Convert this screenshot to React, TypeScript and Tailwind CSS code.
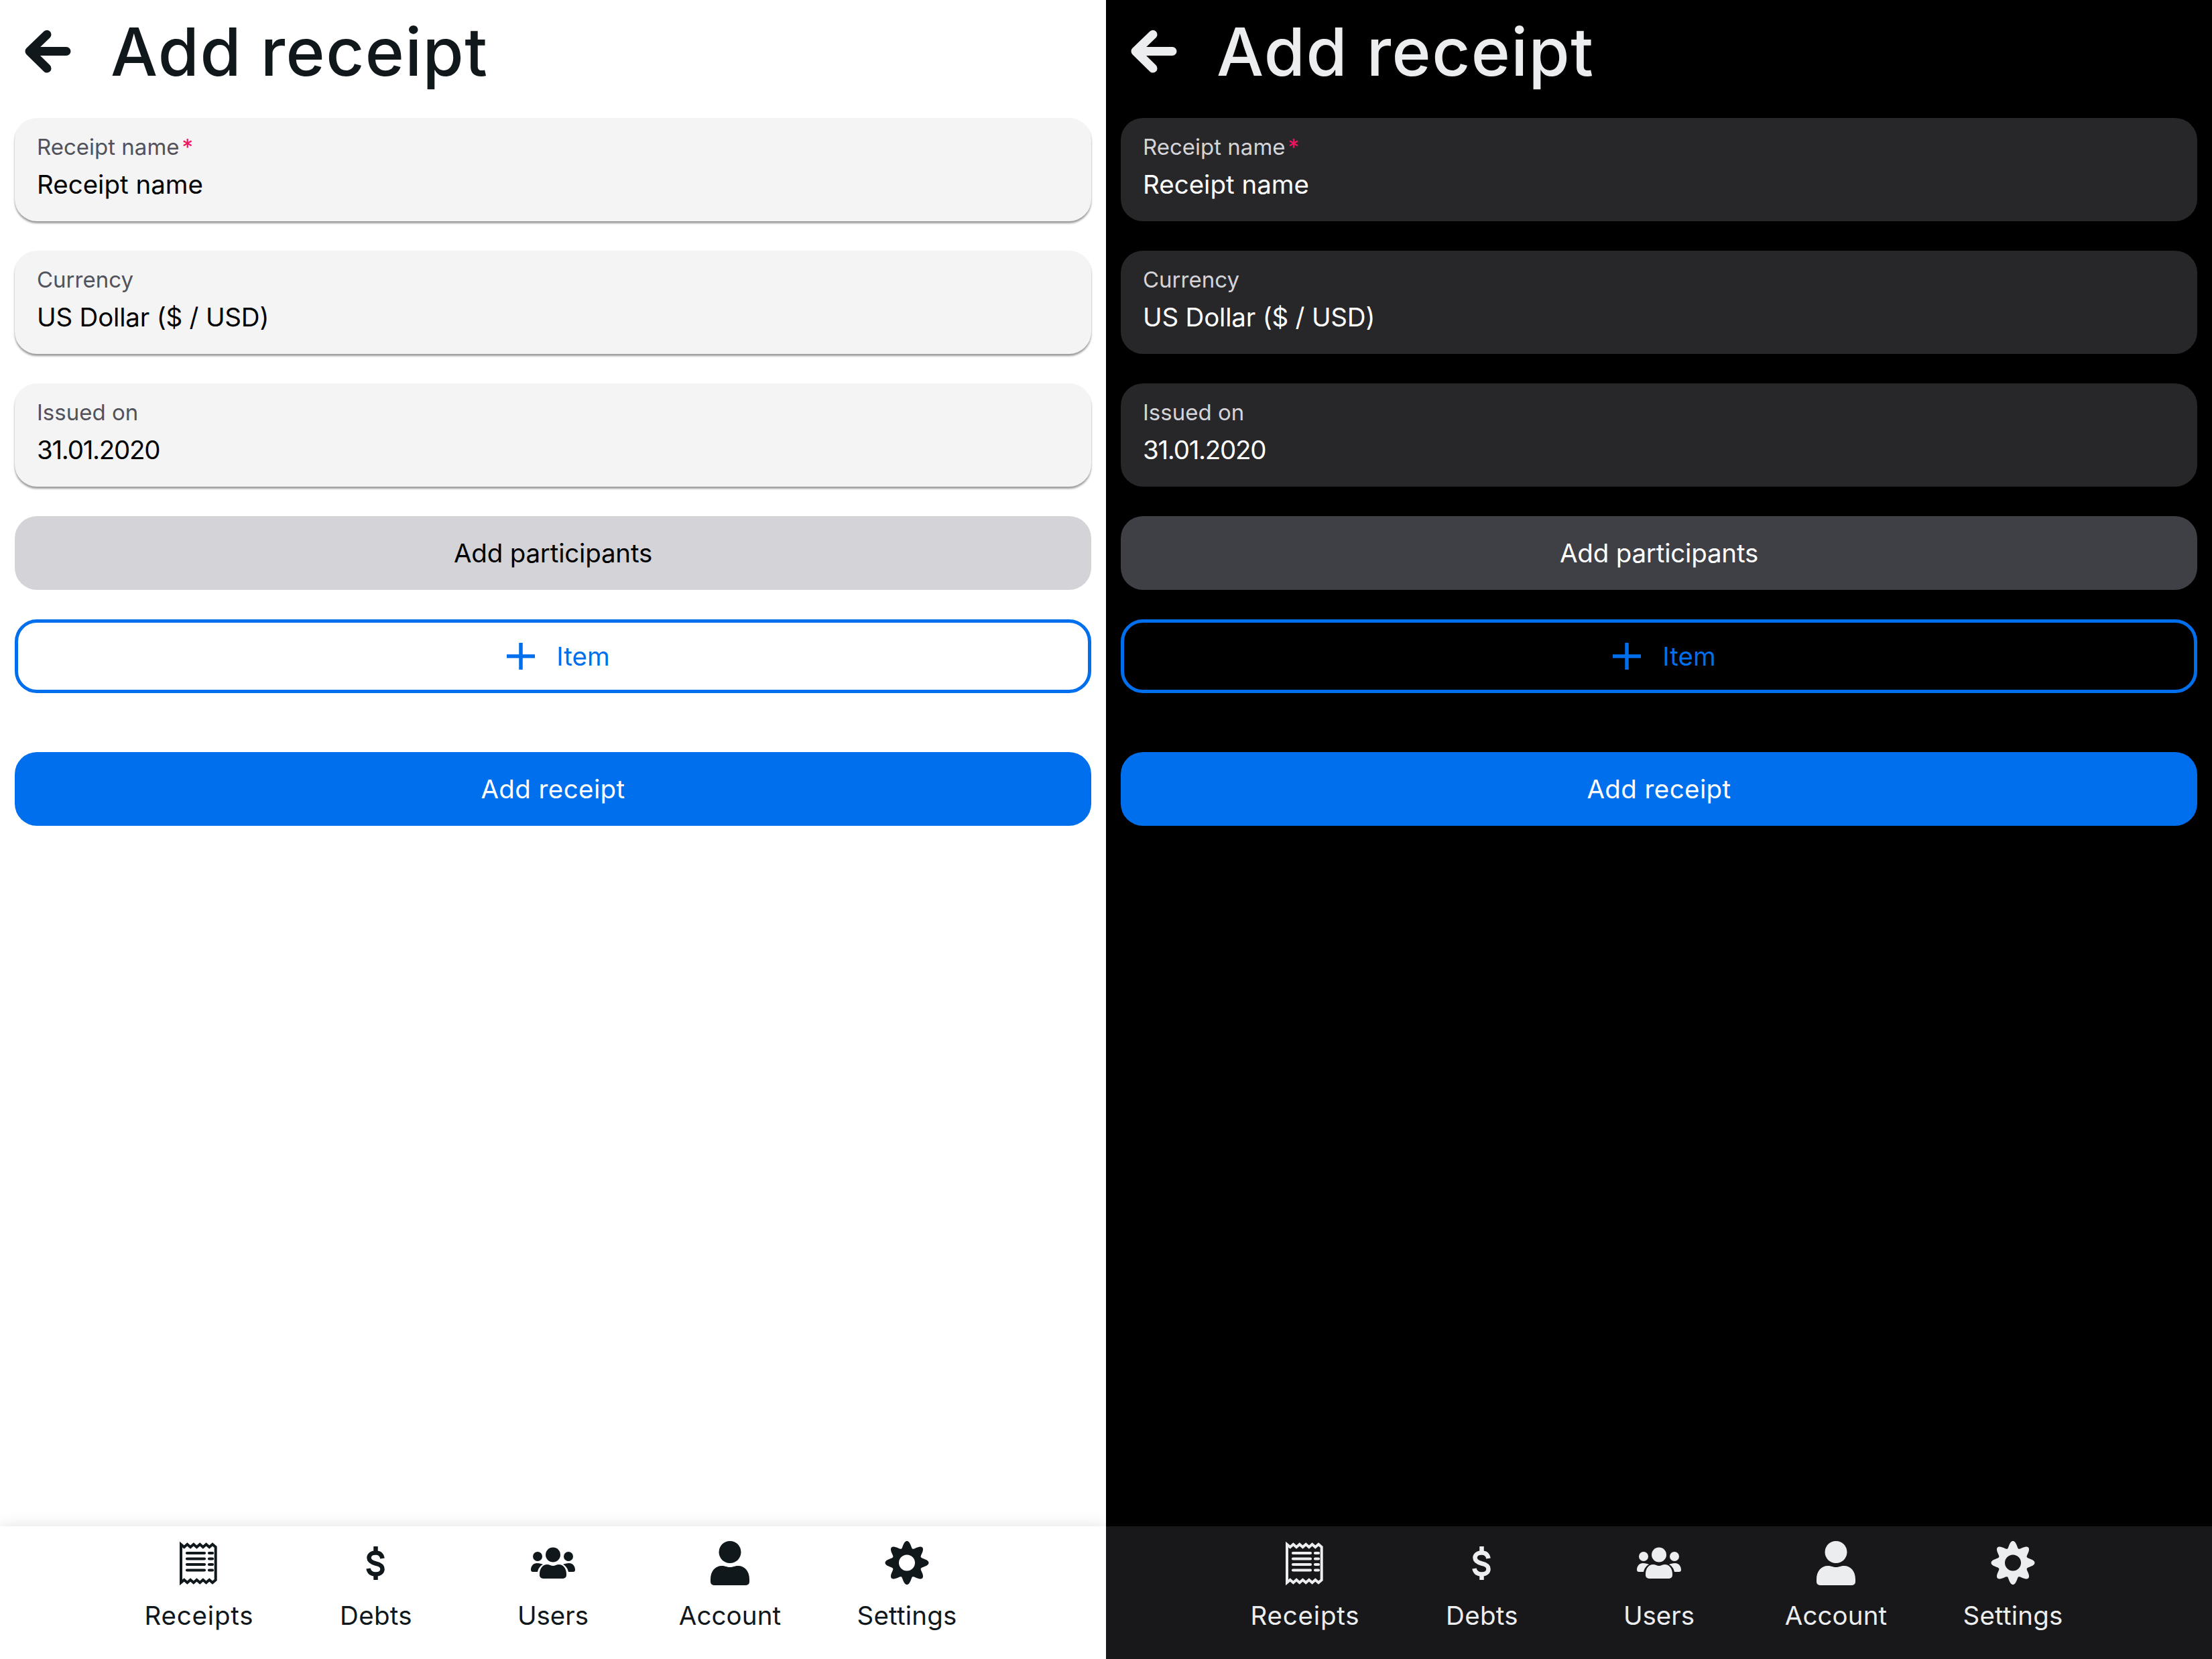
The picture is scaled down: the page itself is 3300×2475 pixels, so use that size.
import React from 'react';

const gearPath = () => {
  const pts: string[] = [];
  for (let i = 0; i < 240; i++) {
    const t = (i / 240) * Math.PI * 2;
    const r = 27.5 + 5 * Math.cos(8 * t);
    pts.push(`${(45 + r * Math.cos(t)).toFixed(2)} ${(41.5 + r * Math.sin(t)).toFixed(2)}`);
  }
  return `M${pts.join('L')}Z M45 29.5a12 12 0 1 0 0 24a12 12 0 1 0 0-24Z`;
};

const ReceiptIcon = () => (
  <svg viewBox="0 0 90 90" className="w-[90px] h-[90px]" fill="none" stroke="currentColor">
    <path
      strokeWidth="4"
      d="M18 14l4.7 4 4.7-4 4.7 4 4.7-4 4.7 4 4.7-4 4.7 4 4.7-4 4.7 4 4.7-4 4.7 4 0 0V67l-4.7 4-4.7-4-4.7 4-4.7-4-4.7 4-4.7-4-4.7 4-4.7-4-4.7 4-4.7-4-4.7 4Z"
    />
    <path strokeWidth="4.2" strokeLinecap="round" d="M27 27H53M27 35.5H53M27 44H53M27 52.5H53M60 27H65M60 35.5H65M60 44H65M60 52.5H65" />
  </svg>
);

const DollarIcon = () => (
  <svg viewBox="0 0 90 90" className="w-[90px] h-[90px]" fill="none" stroke="currentColor">
    <path strokeWidth="6.5" d="M54.5 35C53.5 29 50 26.5 44.5 26.5C38 26.5 34.5 30 34.5 34C34.5 39 39 41 44.5 42.5C51 44 54.5 46 54.5 51C54.5 55 51 58.5 44.5 58.5C38.5 58.5 34.5 55.5 33.5 50" />
    <path strokeWidth="6.5" d="M44.5 17V25M44.5 59V67" />
  </svg>
);

const UsersIcon = () => (
  <svg viewBox="0 0 90 90" className="w-[90px] h-[90px]" fill="currentColor">
    <circle cx="45" cy="29.5" r="11" />
    <circle cx="22" cy="32" r="7" />
    <circle cx="68" cy="32" r="7" />
    <path d="M25 58C25 50 30 44 36 44C40 44 42 46 45 46C48 46 50 44 54 44C60 44 65 50 65 58V60a5 5 0 0 1-5 5H30a5 5 0 0 1-5-5Z" />
    <path d="M12 52C12 46 16 42 21 42C25 42 28 43 30 44C26 46 23 50 22 55H15a3 3 0 0 1-3-3Z" />
    <path d="M78 52C78 46 74 42 69 42C65 42 62 43 60 44C64 46 67 50 68 55H75a3 3 0 0 0 3-3Z" />
  </svg>
);

const AccountIcon = () => (
  <svg viewBox="0 0 90 90" className="w-[90px] h-[90px]" fill="currentColor">
    <circle cx="45" cy="25.5" r="16.5" />
    <path d="M16 66C16 54 23 46 33 46C38 46 40 48 45 48C50 48 52 46 57 46C67 46 74 54 74 66V70a5 5 0 0 1-5 5H21a5 5 0 0 1-5-5Z" />
  </svg>
);

const GearIcon = () => (
  <svg viewBox="0 0 90 90" className="w-[90px] h-[90px]" fill="currentColor">
    <path fillRule="evenodd" d={gearPath()} />
  </svg>
);

const tabs = [
  { label: 'Receipts', icon: <ReceiptIcon />, tracking: 'tracking-[0.8px]' },
  { label: 'Debts', icon: <DollarIcon />, tracking: 'tracking-[0.3px]' },
  { label: 'Users', icon: <UsersIcon />, tracking: 'tracking-[0px]' },
  { label: 'Account', icon: <AccountIcon />, tracking: 'tracking-[0.1px]' },
  { label: 'Settings', icon: <GearIcon />, tracking: 'tracking-[0.2px]' },
];

const Field = ({ label, value, required, dark, valueTracking }: { label: string; value: string; required?: boolean; dark: boolean; valueTracking?: string }) => (
  <div
    className={`h-[154px] rounded-[33px] px-[33px] pt-[21px] ${
      dark ? 'bg-[#27272a]' : 'bg-[#f4f4f5] shadow-[0_3px_3px_rgba(0,0,0,0.4)]'
    }`}
  >
    <div className={`text-[33px] leading-[44px] ${dark ? 'text-[#d4d4d8]' : 'text-[#52525b]'}`}>
      {label}
      {required && <span className="text-[#f31260] ml-[4px]">*</span>}
    </div>
    <div className={`mt-[7px] text-[38.5px] leading-[55px] ${valueTracking ?? ''} ${dark ? 'text-white' : 'text-black'}`}>{value}</div>
  </div>
);

const Pane = ({ dark }: { dark: boolean }) => (
  <div className={`flex flex-col h-[2475px] ${dark ? 'bg-black' : 'bg-white'}`}>
    <header className={`flex items-start h-[176px] shrink-0 pl-[20px] pt-[30px] ${dark ? 'text-[#ecedee]' : 'text-[#11181c]'}`}>
      <svg viewBox="0 0 100 100" className="w-[100px] h-[100px]" fill="none" stroke="currentColor">
        <path strokeWidth="13" strokeLinecap="round" strokeLinejoin="round" d="M50 21.5L24 46.5L50 72M24 46.5H79" />
      </svg>
      <h1 className="ml-[45px] -mt-[8px] text-[99px] leading-[110px] font-medium tracking-[1.4px]">Add receipt</h1>
    </header>
    <main className="flex flex-col gap-[44px] px-[22px]">
      <Field dark={dark} label="Receipt name" value="Receipt name" required />
      <Field dark={dark} label="Currency" value="US Dollar ($ / USD)" valueTracking="tracking-[-0.2px]" />
      <Field dark={dark} label="Issued on" value="31.01.2020" valueTracking="tracking-[-1.3px]" />
      <button className={`h-[110px] rounded-[33px] pt-[2px] text-[38.5px] tracking-[-0.2px] ${dark ? 'bg-[#3f3f46] text-white' : 'bg-[#d4d4d8] text-black'}`}>
        Add participants
      </button>
      <button className="h-[110px] rounded-[33px] border-[5.5px] border-[#006fee] pl-[16px] pt-[2px] text-[38.5px] text-[#006fee] flex items-center justify-center gap-[32px]">
        <svg viewBox="0 0 42 40" className="w-[42px] h-[40px] -mt-[2px]" fill="none" stroke="currentColor">
          <path strokeWidth="5.5" d="M21 0V40M0 20H42" />
        </svg>
        Item
      </button>
      <button className="mt-[44px] h-[110px] rounded-[33px] bg-[#006fee] pt-[2px] text-white text-[38.5px] tracking-[0.4px]">Add receipt</button>
    </main>
    <footer
      className={`mt-auto h-[198px] shrink-0 flex justify-center pt-[13px] ${
        dark ? 'bg-[#18181b] text-[#ecedee]' : 'bg-white text-[#11181c] shadow-[0_0_22px_rgba(0,0,0,0.12)]'
      }`}
    >
      {tabs.map(tab => (
        <div key={tab.label} className="w-[264px] flex flex-col items-center">
          {tab.icon}
          <span className={`mt-[3px] text-[38.5px] leading-[55px] ${tab.tracking}`}>{tab.label}</span>
        </div>
      ))}
    </footer>
  </div>
);

export default function App() {
  return (
    <div className="grid grid-cols-2 w-[3300px] h-[2475px] overflow-hidden font-['Inter',sans-serif]">
      <Pane dark={false} />
      <Pane dark />
    </div>
  );
}
